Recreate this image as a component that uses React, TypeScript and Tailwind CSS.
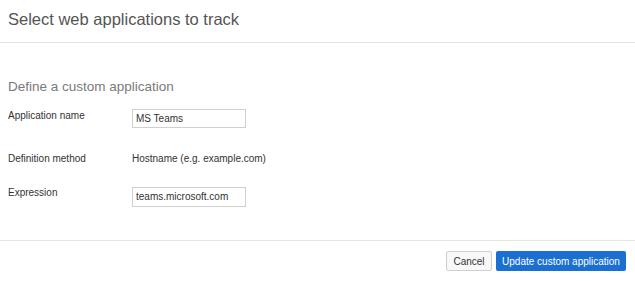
import React from "react";

export default function App() {
  const font = { fontFamily: '"Liberation Sans", Arial, sans-serif' };
  return (
    <div className="w-[635px] h-[281px] bg-white flex flex-col text-[#333]" style={font}>
      <div className="h-[43px] border-b border-[#e3e3e3] flex items-center pl-[8px] pb-[3px]">
        <h1 className="text-[16.5px] text-[#555] font-normal leading-none">Select web applications to track</h1>
      </div>
      <div className="h-[198px] border-b border-[#e6e6e6] flex flex-col pl-[8px]">
        <h2 className="mt-[37px] text-[13.5px] text-[#7a7a7a] leading-none">Define a custom application</h2>
        <div className="mt-[15px] flex items-start h-[19px]">
          <div className="w-[124px] text-[10px] leading-none pt-[2px]">Application name</div>
          <input
            readOnly
            value="MS Teams"
            className="w-[114px] h-[19px] border border-[#d0d0d0] px-[3px] text-[10px] text-[#333] outline-none"
            style={font}
          />
        </div>
        <div className="mt-[25px] flex items-center h-[12px]">
          <div className="w-[124px] text-[10px] leading-none">Definition method</div>
          <div className="text-[10px] leading-none">Hostname (e.g. example.com)</div>
        </div>
        <div className="mt-[22px] flex items-start h-[20px]">
          <div className="w-[124px] text-[10px] leading-none pt-[1px]">Expression</div>
          <input
            readOnly
            value="teams.microsoft.com"
            className="w-[114px] h-[20px] border border-[#d0d0d0] px-[3px] text-[10px] text-[#333] outline-none"
            style={font}
          />
        </div>
      </div>
      <div className="flex justify-end gap-[4px] pr-[9px] pt-[10px]">
        <button className="w-[46px] h-[20px] border border-[#cfcfcf] bg-[#f8f8f8] text-[10px] text-[#333] rounded-[2px] flex items-center justify-center" style={font}>
          Cancel
        </button>
        <button className="w-[130px] h-[20px] bg-[#1a6fd1] text-white text-[10px] rounded-[2px] flex items-center justify-center" style={font}>
          Update custom application
        </button>
      </div>
    </div>
  );
}
